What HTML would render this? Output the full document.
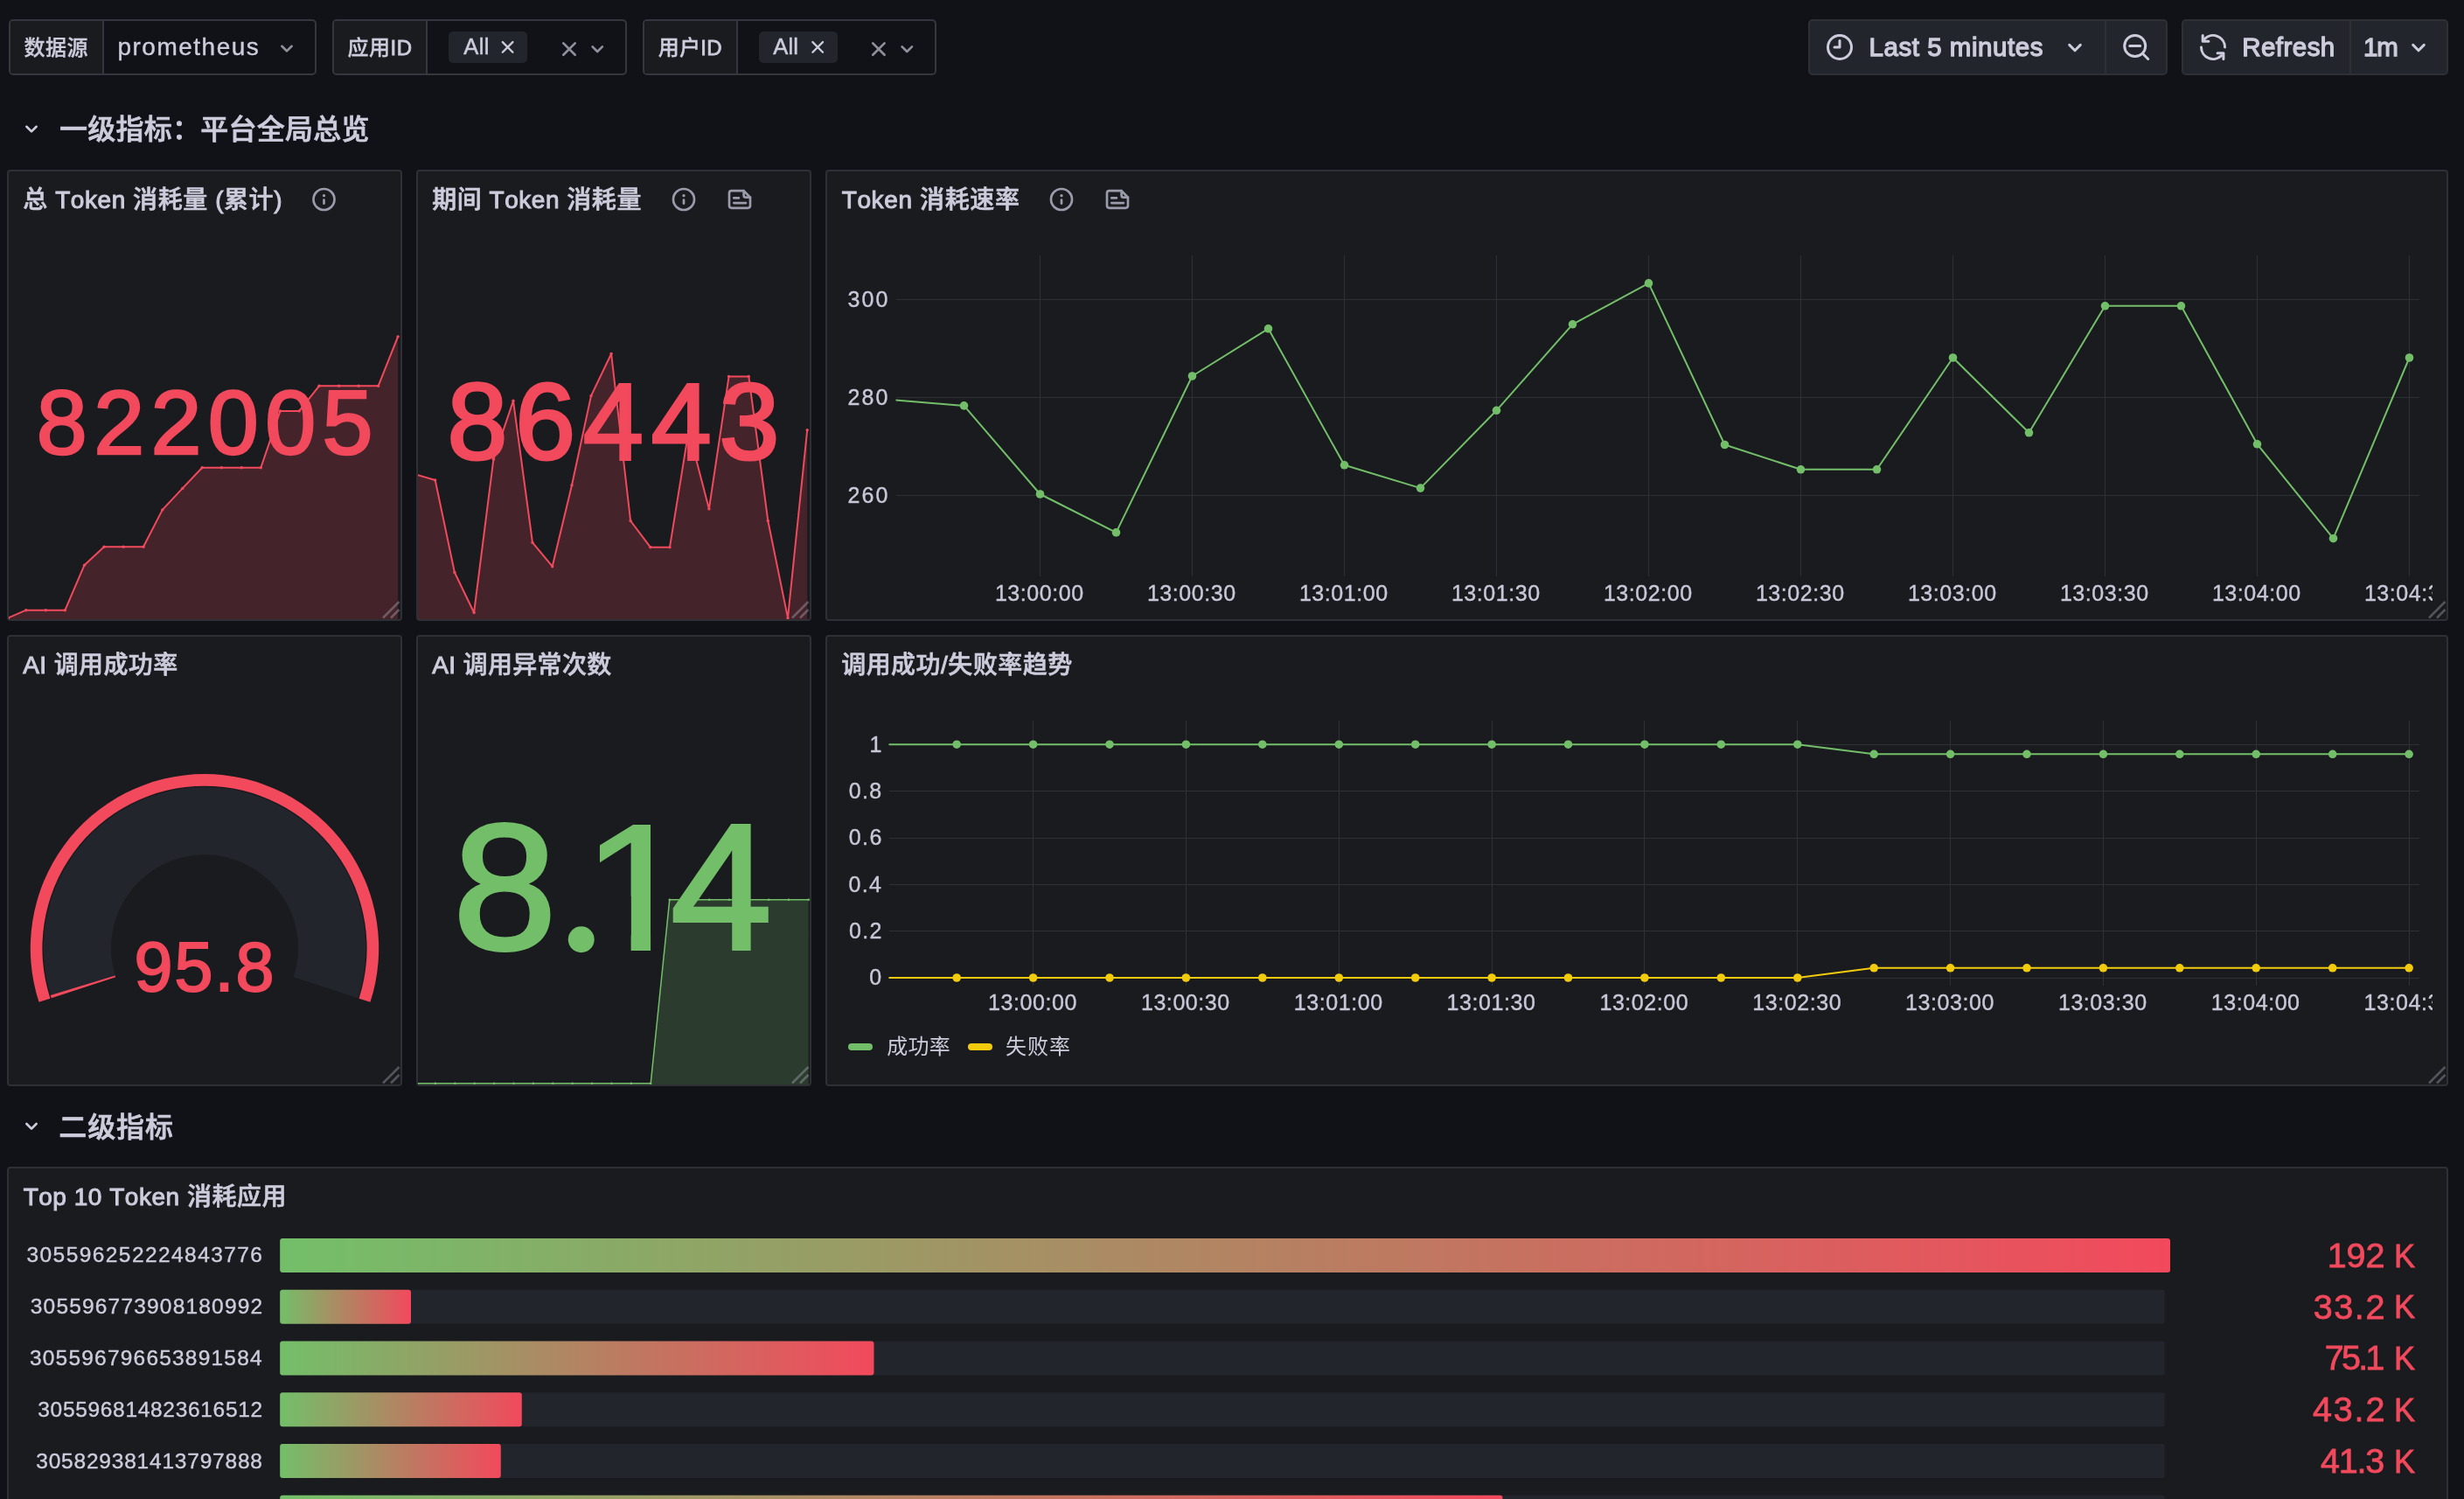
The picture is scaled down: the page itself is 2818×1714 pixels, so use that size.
<!DOCTYPE html><html lang="zh"><head><meta charset="utf-8"><title>Dashboard</title><style>
*{box-sizing:border-box;margin:0;padding:0}
html,body{background:#111217}
#root{position:relative;width:2818px;height:1714px;overflow:hidden;background:#111217}
body{font-family:"Liberation Sans","Noto Sans CJK SC",sans-serif;color:#ccccdc;-webkit-font-smoothing:antialiased;font-kerning:none;font-variant-ligatures:none}
.abs{position:absolute}
.panel{position:absolute;background:#1a1b1f;border:2px solid #2e3036;border-radius:4px;overflow:hidden}
.ptitle{position:absolute;left:17px;top:14px;height:40px;line-height:40px;font-size:28px;font-weight:500;white-space:nowrap;color:#ccccdc;-webkit-text-stroke:0.5px #ccccdc}
.t{position:absolute;white-space:nowrap;line-height:1}
.varbox{position:absolute;top:22px;height:64px;border:2px solid #36373e;border-radius:5px;background:#111217}
.varlab{position:absolute;left:0;top:0;bottom:0;background:#1a1b1f;border-right:2px solid #36373e;border-radius:3px 0 0 3px}
.chip{position:absolute;top:12px;height:36px;background:#22252b;border-radius:5px}
.tbtn{position:absolute;top:22px;height:64px;background:#22252b;border:2px solid #2e3036}
svg{position:absolute;left:0;top:0;overflow:visible}
.txt{position:absolute;left:0;top:0;width:2818px;height:1714px;will-change:transform}
.big{position:absolute;white-space:nowrap;line-height:1;font-weight:400}
</style></head><body><div id="root">
<div class="varbox" style="left:10px;width:352px"><div class="varlab" style="width:107px"></div></div>
<div class="varbox" style="left:380px;width:337px"><div class="varlab" style="width:107px"></div><div class="chip" style="left:131px;width:90px"></div></div>
<div class="varbox" style="left:735px;width:336px"><div class="varlab" style="width:107px"></div><div class="chip" style="left:131px;width:90px"></div></div>
<div class="tbtn" style="left:2068px;width:341px;border-radius:5px 0 0 5px"></div>
<div class="tbtn" style="left:2407px;width:72px;border-radius:0 5px 5px 0"></div>
<div class="tbtn" style="left:2495px;width:194px;border-radius:5px 0 0 5px"></div>
<div class="tbtn" style="left:2687px;width:113px;border-radius:0 5px 5px 0"></div>
<div class="panel" style="left:8px;top:194px;width:452px;height:516px"></div>
<div class="panel" style="left:476px;top:194px;width:452px;height:516px"></div>
<div class="panel" style="left:944px;top:194px;width:1856px;height:516px"></div>
<div class="panel" style="left:8px;top:726px;width:452px;height:516px"></div>
<div class="panel" style="left:476px;top:726px;width:452px;height:516px"></div>
<div class="panel" style="left:944px;top:726px;width:1856px;height:516px"></div>
<div class="panel" style="left:8px;top:1334px;width:2792px;height:420px"></div>
<svg width="2818" height="1714" viewBox="0 0 2818 1714"><path d="M322.4 52.8 L328.0 58.4 L333.6 52.8" fill="none" stroke="#8f909c" stroke-width="2.67" stroke-linecap="round" stroke-linejoin="round"/><path d="M574.8 48.1 L586.4 59.7 M586.4 48.1 L574.8 59.7" fill="none" stroke="#ccccdc" stroke-width="2.33" stroke-linecap="round"/><path d="M644.3 49.4 L657.7 62.8 M657.7 49.4 L644.3 62.8" fill="none" stroke="#8f909c" stroke-width="2.67" stroke-linecap="round"/><path d="M677.6 53.4 L683.2 59.0 L688.9 53.4" fill="none" stroke="#8f909c" stroke-width="2.67" stroke-linecap="round" stroke-linejoin="round"/><path d="M929.4 48.1 L941.0 59.7 M941.0 48.1 L929.4 59.7" fill="none" stroke="#ccccdc" stroke-width="2.33" stroke-linecap="round"/><path d="M998.2 49.4 L1011.6 62.8 M1011.6 49.4 L998.2 62.8" fill="none" stroke="#8f909c" stroke-width="2.67" stroke-linecap="round"/><path d="M1031.6 53.4 L1037.3 59.0 L1043.0 53.4" fill="none" stroke="#8f909c" stroke-width="2.67" stroke-linecap="round" stroke-linejoin="round"/><path d="M2366.7 51.4 L2373.0 57.8 L2379.3 51.4" fill="none" stroke="#ccccdc" stroke-width="3" stroke-linecap="round" stroke-linejoin="round"/><path d="M2759.7 51.4 L2766.0 57.8 L2772.3 51.4" fill="none" stroke="#ccccdc" stroke-width="3" stroke-linecap="round" stroke-linejoin="round"/><circle cx="2104" cy="54" r="13.5" fill="none" stroke="#ccccdc" stroke-width="3"/><path d="M2104 46.5 V54 H2098" fill="none" stroke="#ccccdc" stroke-width="3" stroke-linecap="round" stroke-linejoin="round"/><circle cx="2441.7" cy="52.5" r="12" fill="none" stroke="#ccccdc" stroke-width="3"/><path d="M2435.7 52.5 H2447.7 M2451.2 62.0 L2456.7 67.5" stroke="#ccccdc" stroke-width="3" stroke-linecap="round"/><path d="M2521.5 44.4 A13.5 13.5 0 0 1 2544.5 54.0" fill="none" stroke="#ccccdc" stroke-width="3" stroke-linecap="round"/><path d="M2517.5 54.0 A13.5 13.5 0 0 0 2540.5 63.6" fill="none" stroke="#ccccdc" stroke-width="3" stroke-linecap="round"/><path d="M2519.2 40.5 V47.25 H2525.9" fill="none" stroke="#ccccdc" stroke-width="3" stroke-linecap="round" stroke-linejoin="round"/><path d="M2536.1 60.75 H2542.9 V67.5" fill="none" stroke="#ccccdc" stroke-width="3" stroke-linecap="round" stroke-linejoin="round"/><path d="M30.4 144.8 L36.0 150.4 L41.6 144.8" fill="none" stroke="#ccccdc" stroke-width="2.67" stroke-linecap="round" stroke-linejoin="round"/><path d="M30.4 1285.0 L36.0 1290.6 L41.6 1285.0" fill="none" stroke="#ccccdc" stroke-width="2.67" stroke-linecap="round" stroke-linejoin="round"/><defs><clipPath id="c1"><rect x="10" y="196" width="448" height="512"/></clipPath><clipPath id="c2"><rect x="478" y="196" width="448" height="512"/></clipPath><clipPath id="c5"><rect x="478" y="728" width="448" height="512"/></clipPath><clipPath id="c3"><rect x="1024.5" y="280" width="1743" height="390"/></clipPath><clipPath id="c6"><rect x="1016.5" y="815" width="1751" height="320"/></clipPath></defs><g clip-path="url(#c1)"><path d="M9.5 706.5 L29.8 697.7 L52.3 697.7 L74.4 697.7 L96.5 646.2 L119.0 625.2 L141.2 625.2 L164.0 625.2 L185.8 582.9 L208.7 558.4 L231.2 534.8 L253.3 534.8 L276.2 534.8 L298.3 534.8 L320.5 469.9 L342.2 469.9 L365.0 441.3 L387.6 441.3 L410.1 441.3 L432.6 441.3 L455.1 384.9 L455.1 709 L9.5 709 Z" fill="#F2495C" fill-opacity="0.2" stroke="none"/><path d="M9.5 706.5 L29.8 697.7 L52.3 697.7 L74.4 697.7 L96.5 646.2 L119.0 625.2 L141.2 625.2 L164.0 625.2 L185.8 582.9 L208.7 558.4 L231.2 534.8 L253.3 534.8 L276.2 534.8 L298.3 534.8 L320.5 469.9 L342.2 469.9 L365.0 441.3 L387.6 441.3 L410.1 441.3 L432.6 441.3 L455.1 384.9" fill="none" stroke="#F2495C" stroke-width="2" stroke-linejoin="round"/><circle cx="9.5" cy="706.5" r="1.7" fill="#F2495C"/><circle cx="29.8" cy="697.7" r="1.7" fill="#F2495C"/><circle cx="52.3" cy="697.7" r="1.7" fill="#F2495C"/><circle cx="74.4" cy="697.7" r="1.7" fill="#F2495C"/><circle cx="96.5" cy="646.2" r="1.7" fill="#F2495C"/><circle cx="119.0" cy="625.2" r="1.7" fill="#F2495C"/><circle cx="141.2" cy="625.2" r="1.7" fill="#F2495C"/><circle cx="164.0" cy="625.2" r="1.7" fill="#F2495C"/><circle cx="185.8" cy="582.9" r="1.7" fill="#F2495C"/><circle cx="208.7" cy="558.4" r="1.7" fill="#F2495C"/><circle cx="231.2" cy="534.8" r="1.7" fill="#F2495C"/><circle cx="253.3" cy="534.8" r="1.7" fill="#F2495C"/><circle cx="276.2" cy="534.8" r="1.7" fill="#F2495C"/><circle cx="298.3" cy="534.8" r="1.7" fill="#F2495C"/><circle cx="320.5" cy="469.9" r="1.7" fill="#F2495C"/><circle cx="342.2" cy="469.9" r="1.7" fill="#F2495C"/><circle cx="365.0" cy="441.3" r="1.7" fill="#F2495C"/><circle cx="387.6" cy="441.3" r="1.7" fill="#F2495C"/><circle cx="410.1" cy="441.3" r="1.7" fill="#F2495C"/><circle cx="432.6" cy="441.3" r="1.7" fill="#F2495C"/><circle cx="455.1" cy="384.9" r="1.7" fill="#F2495C"/></g><g clip-path="url(#c2)"><path d="M475.5 542.5 L497.7 549.0 L519.9 654.5 L542.1 700.5 L564.4 525.2 L587.0 458.3 L609.0 620.4 L631.7 647.7 L654.0 554.7 L676.0 452.6 L699.1 404.5 L721.1 595.5 L743.8 625.7 L766.0 625.7 L787.6 492.3 L810.9 581.9 L833.6 430.4 L856.3 430.4 L878.3 595.5 L901.0 706.6 L923.2 491.8 L923.2 709 L475.5 709 Z" fill="#F2495C" fill-opacity="0.2" stroke="none"/><path d="M475.5 542.5 L497.7 549.0 L519.9 654.5 L542.1 700.5 L564.4 525.2 L587.0 458.3 L609.0 620.4 L631.7 647.7 L654.0 554.7 L676.0 452.6 L699.1 404.5 L721.1 595.5 L743.8 625.7 L766.0 625.7 L787.6 492.3 L810.9 581.9 L833.6 430.4 L856.3 430.4 L878.3 595.5 L901.0 706.6 L923.2 491.8" fill="none" stroke="#F2495C" stroke-width="2" stroke-linejoin="round"/><circle cx="475.5" cy="542.5" r="1.7" fill="#F2495C"/><circle cx="497.7" cy="549.0" r="1.7" fill="#F2495C"/><circle cx="519.9" cy="654.5" r="1.7" fill="#F2495C"/><circle cx="542.1" cy="700.5" r="1.7" fill="#F2495C"/><circle cx="564.4" cy="525.2" r="1.7" fill="#F2495C"/><circle cx="587.0" cy="458.3" r="1.7" fill="#F2495C"/><circle cx="609.0" cy="620.4" r="1.7" fill="#F2495C"/><circle cx="631.7" cy="647.7" r="1.7" fill="#F2495C"/><circle cx="654.0" cy="554.7" r="1.7" fill="#F2495C"/><circle cx="676.0" cy="452.6" r="1.7" fill="#F2495C"/><circle cx="699.1" cy="404.5" r="1.7" fill="#F2495C"/><circle cx="721.1" cy="595.5" r="1.7" fill="#F2495C"/><circle cx="743.8" cy="625.7" r="1.7" fill="#F2495C"/><circle cx="766.0" cy="625.7" r="1.7" fill="#F2495C"/><circle cx="787.6" cy="492.3" r="1.7" fill="#F2495C"/><circle cx="810.9" cy="581.9" r="1.7" fill="#F2495C"/><circle cx="833.6" cy="430.4" r="1.7" fill="#F2495C"/><circle cx="856.3" cy="430.4" r="1.7" fill="#F2495C"/><circle cx="878.3" cy="595.5" r="1.7" fill="#F2495C"/><circle cx="901.0" cy="706.6" r="1.7" fill="#F2495C"/><circle cx="923.2" cy="491.8" r="1.7" fill="#F2495C"/></g><g clip-path="url(#c5)"><path d="M475.5 1238.8 L497.9 1238.8 L520.3 1238.8 L542.7 1238.8 L565.1 1238.8 L587.5 1238.8 L609.9 1238.8 L632.3 1238.8 L654.7 1238.8 L677.1 1238.8 L699.5 1238.8 L721.9 1238.8 L744.2 1238.8 L765.8 1028.7 L788.5 1028.7 L811.2 1028.7 L833.9 1028.7 L856.6 1028.7 L879.3 1028.7 L902.0 1028.7 L924.7 1028.7 L924.7 1241 L475.5 1241 Z" fill="#73BF69" fill-opacity="0.2" stroke="none"/><path d="M475.5 1238.8 L497.9 1238.8 L520.3 1238.8 L542.7 1238.8 L565.1 1238.8 L587.5 1238.8 L609.9 1238.8 L632.3 1238.8 L654.7 1238.8 L677.1 1238.8 L699.5 1238.8 L721.9 1238.8 L744.2 1238.8 L765.8 1028.7 L788.5 1028.7 L811.2 1028.7 L833.9 1028.7 L856.6 1028.7 L879.3 1028.7 L902.0 1028.7 L924.7 1028.7" fill="none" stroke="#73BF69" stroke-width="1.5" stroke-linejoin="round"/><circle cx="475.5" cy="1238.8" r="1.3" fill="#73BF69"/><circle cx="497.9" cy="1238.8" r="1.3" fill="#73BF69"/><circle cx="520.3" cy="1238.8" r="1.3" fill="#73BF69"/><circle cx="542.7" cy="1238.8" r="1.3" fill="#73BF69"/><circle cx="565.1" cy="1238.8" r="1.3" fill="#73BF69"/><circle cx="587.5" cy="1238.8" r="1.3" fill="#73BF69"/><circle cx="609.9" cy="1238.8" r="1.3" fill="#73BF69"/><circle cx="632.3" cy="1238.8" r="1.3" fill="#73BF69"/><circle cx="654.7" cy="1238.8" r="1.3" fill="#73BF69"/><circle cx="677.1" cy="1238.8" r="1.3" fill="#73BF69"/><circle cx="699.5" cy="1238.8" r="1.3" fill="#73BF69"/><circle cx="721.9" cy="1238.8" r="1.3" fill="#73BF69"/><circle cx="744.2" cy="1238.8" r="1.3" fill="#73BF69"/><circle cx="765.8" cy="1028.7" r="1.3" fill="#73BF69"/><circle cx="788.5" cy="1028.7" r="1.3" fill="#73BF69"/><circle cx="811.2" cy="1028.7" r="1.3" fill="#73BF69"/><circle cx="833.9" cy="1028.7" r="1.3" fill="#73BF69"/><circle cx="856.6" cy="1028.7" r="1.3" fill="#73BF69"/><circle cx="879.3" cy="1028.7" r="1.3" fill="#73BF69"/><circle cx="902.0" cy="1028.7" r="1.3" fill="#73BF69"/><circle cx="924.7" cy="1028.7" r="1.3" fill="#73BF69"/></g><circle cx="370.5" cy="228" r="12" fill="none" stroke="#9a9bab" stroke-width="2.67"/><circle cx="370.5" cy="223.67" r="1.67" fill="#9a9bab"/><path d="M370.5 228.67 V232.67" stroke="#9a9bab" stroke-width="2.67" stroke-linecap="round"/><circle cx="782" cy="228" r="12" fill="none" stroke="#9a9bab" stroke-width="2.67"/><circle cx="782" cy="223.67" r="1.67" fill="#9a9bab"/><path d="M782 228.67 V232.67" stroke="#9a9bab" stroke-width="2.67" stroke-linecap="round"/><g transform="translate(846 228)" fill="none" stroke="#9a9bab" stroke-width="2.67" stroke-linejoin="round" stroke-linecap="round"><path d="M-9.3 -9.8 H4.6 L12 -2.4 V7.1 a2.7 2.7 0 0 1 -2.7 2.7 H-9.3 a2.7 2.7 0 0 1 -2.7 -2.7 V-7.1 a2.7 2.7 0 0 1 2.7 -2.7 Z"/><path d="M4.6 -9.8 V-4.6 a2.2 2.2 0 0 0 2.2 2.2 H12"/><path d="M-6.7 -1.6 H-1.1 M-6.7 4.1 H7"/></g><circle cx="1214" cy="228" r="12" fill="none" stroke="#9a9bab" stroke-width="2.67"/><circle cx="1214" cy="223.67" r="1.67" fill="#9a9bab"/><path d="M1214 228.67 V232.67" stroke="#9a9bab" stroke-width="2.67" stroke-linecap="round"/><g transform="translate(1278 228)" fill="none" stroke="#9a9bab" stroke-width="2.67" stroke-linejoin="round" stroke-linecap="round"><path d="M-9.3 -9.8 H4.6 L12 -2.4 V7.1 a2.7 2.7 0 0 1 -2.7 2.7 H-9.3 a2.7 2.7 0 0 1 -2.7 -2.7 V-7.1 a2.7 2.7 0 0 1 2.7 -2.7 Z"/><path d="M4.6 -9.8 V-4.6 a2.2 2.2 0 0 0 2.2 2.2 H12"/><path d="M-6.7 -1.6 H-1.1 M-6.7 4.1 H7"/></g><path d="M438 706.5 L456.5 688 M447 706.5 L456.5 697" stroke="rgba(204,204,220,0.33)" stroke-width="2.5" stroke-linecap="butt" fill="none"/><path d="M906 706.5 L924.5 688 M915 706.5 L924.5 697" stroke="rgba(204,204,220,0.33)" stroke-width="2.5" stroke-linecap="butt" fill="none"/><path d="M2778 706.5 L2796.5 688 M2787 706.5 L2796.5 697" stroke="rgba(204,204,220,0.33)" stroke-width="2.5" stroke-linecap="butt" fill="none"/><path d="M438 1238.5 L456.5 1220 M447 1238.5 L456.5 1229" stroke="rgba(204,204,220,0.33)" stroke-width="2.5" stroke-linecap="butt" fill="none"/><path d="M906 1238.5 L924.5 1220 M915 1238.5 L924.5 1229" stroke="rgba(204,204,220,0.33)" stroke-width="2.5" stroke-linecap="butt" fill="none"/><path d="M2778 1238.5 L2796.5 1220 M2787 1238.5 L2796.5 1229" stroke="rgba(204,204,220,0.33)" stroke-width="2.5" stroke-linecap="butt" fill="none"/><rect x="1189" y="292" width="1" height="367" fill="#2d3035"/><rect x="1363" y="292" width="1" height="367" fill="#2d3035"/><rect x="1537" y="292" width="1" height="367" fill="#2d3035"/><rect x="1711" y="292" width="1" height="367" fill="#2d3035"/><rect x="1885" y="292" width="1" height="367" fill="#2d3035"/><rect x="2059" y="292" width="1" height="367" fill="#2d3035"/><rect x="2233" y="292" width="1" height="367" fill="#2d3035"/><rect x="2407" y="292" width="1" height="367" fill="#2d3035"/><rect x="2581" y="292" width="1" height="367" fill="#2d3035"/><rect x="2755" y="292" width="1" height="367" fill="#2d3035"/><rect x="1025" y="342" width="1742" height="1" fill="#2d3035"/><rect x="1025" y="454" width="1742" height="1" fill="#2d3035"/><rect x="1025" y="566" width="1742" height="1" fill="#2d3035"/><g clip-path="url(#c3)"><path d="M1015.5 456.8 L1102.5 463.9 L1189.5 565.0 L1276.5 608.9 L1363.5 430.0 L1450.5 375.8 L1537.5 531.8 L1624.5 558.1 L1711.5 469.3 L1798.5 370.8 L1885.5 323.9 L1972.5 508.5 L2059.5 536.8 L2146.5 536.8 L2233.5 409.0 L2320.5 494.8 L2407.5 349.8 L2494.5 349.8 L2581.5 507.8 L2668.5 615.7 L2755.5 409.0" fill="none" stroke="#73BF69" stroke-width="2" stroke-linejoin="round"/></g><circle cx="1102.5" cy="463.9" r="4.8" fill="#73BF69"/><circle cx="1189.5" cy="565.0" r="4.8" fill="#73BF69"/><circle cx="1276.5" cy="608.9" r="4.8" fill="#73BF69"/><circle cx="1363.5" cy="430.0" r="4.8" fill="#73BF69"/><circle cx="1450.5" cy="375.8" r="4.8" fill="#73BF69"/><circle cx="1537.5" cy="531.8" r="4.8" fill="#73BF69"/><circle cx="1624.5" cy="558.1" r="4.8" fill="#73BF69"/><circle cx="1711.5" cy="469.3" r="4.8" fill="#73BF69"/><circle cx="1798.5" cy="370.8" r="4.8" fill="#73BF69"/><circle cx="1885.5" cy="323.9" r="4.8" fill="#73BF69"/><circle cx="1972.5" cy="508.5" r="4.8" fill="#73BF69"/><circle cx="2059.5" cy="536.8" r="4.8" fill="#73BF69"/><circle cx="2146.5" cy="536.8" r="4.8" fill="#73BF69"/><circle cx="2233.5" cy="409.0" r="4.8" fill="#73BF69"/><circle cx="2320.5" cy="494.8" r="4.8" fill="#73BF69"/><circle cx="2407.5" cy="349.8" r="4.8" fill="#73BF69"/><circle cx="2494.5" cy="349.8" r="4.8" fill="#73BF69"/><circle cx="2581.5" cy="507.8" r="4.8" fill="#73BF69"/><circle cx="2668.5" cy="615.7" r="4.8" fill="#73BF69"/><circle cx="2755.5" cy="409.0" r="4.8" fill="#73BF69"/><path d="M44.55 1145.86 A199.2 199.2 0 1 1 423.45 1145.86 L410.52 1141.65 A185.6 185.6 0 1 0 57.48 1141.65 Z" fill="#F2495C"/><path d="M58.82 1141.22 A184.2 184.2 0 1 1 409.18 1141.22 L335.76 1117.36 A107 107 0 1 0 132.24 1117.36 Z" fill="#22252b"/><path d="M58.82 1141.22 A184.2 184.2 0 0 1 57.77 1137.91 L131.63 1115.44 A107 107 0 0 0 132.24 1117.36 Z" fill="#F2495C"/><rect x="1181" y="824" width="1" height="303" fill="#2d3035"/><rect x="1356" y="824" width="1" height="303" fill="#2d3035"/><rect x="1531" y="824" width="1" height="303" fill="#2d3035"/><rect x="1706" y="824" width="1" height="303" fill="#2d3035"/><rect x="1880" y="824" width="1" height="303" fill="#2d3035"/><rect x="2055" y="824" width="1" height="303" fill="#2d3035"/><rect x="2230" y="824" width="1" height="303" fill="#2d3035"/><rect x="2405" y="824" width="1" height="303" fill="#2d3035"/><rect x="2580" y="824" width="1" height="303" fill="#2d3035"/><rect x="2755" y="824" width="1" height="303" fill="#2d3035"/><rect x="1017" y="851" width="1750" height="1" fill="#2d3035"/><rect x="1017" y="904" width="1750" height="1" fill="#2d3035"/><rect x="1017" y="958" width="1750" height="1" fill="#2d3035"/><rect x="1017" y="1011" width="1750" height="1" fill="#2d3035"/><rect x="1017" y="1064" width="1750" height="1" fill="#2d3035"/><rect x="1017" y="1118" width="1750" height="1" fill="#2d3035"/><g clip-path="url(#c6)"><path d="M1010.0 851.2 L1094.2 851.2 L1181.6 851.2 L1269.0 851.2 L1356.4 851.2 L1443.8 851.2 L1531.3 851.2 L1618.7 851.2 L1706.1 851.2 L1793.5 851.2 L1880.9 851.2 L1968.3 851.2 L2055.8 851.2 L2143.2 862.3 L2230.6 862.3 L2318.0 862.3 L2405.4 862.3 L2492.8 862.3 L2580.2 862.3 L2667.7 862.3 L2755.1 862.3" fill="none" stroke="#73BF69" stroke-width="2" stroke-linejoin="round"/></g><circle cx="1094.2" cy="851.2" r="4.8" fill="#73BF69"/><circle cx="1181.6" cy="851.2" r="4.8" fill="#73BF69"/><circle cx="1269.0" cy="851.2" r="4.8" fill="#73BF69"/><circle cx="1356.4" cy="851.2" r="4.8" fill="#73BF69"/><circle cx="1443.8" cy="851.2" r="4.8" fill="#73BF69"/><circle cx="1531.3" cy="851.2" r="4.8" fill="#73BF69"/><circle cx="1618.7" cy="851.2" r="4.8" fill="#73BF69"/><circle cx="1706.1" cy="851.2" r="4.8" fill="#73BF69"/><circle cx="1793.5" cy="851.2" r="4.8" fill="#73BF69"/><circle cx="1880.9" cy="851.2" r="4.8" fill="#73BF69"/><circle cx="1968.3" cy="851.2" r="4.8" fill="#73BF69"/><circle cx="2055.8" cy="851.2" r="4.8" fill="#73BF69"/><circle cx="2143.2" cy="862.3" r="4.8" fill="#73BF69"/><circle cx="2230.6" cy="862.3" r="4.8" fill="#73BF69"/><circle cx="2318.0" cy="862.3" r="4.8" fill="#73BF69"/><circle cx="2405.4" cy="862.3" r="4.8" fill="#73BF69"/><circle cx="2492.8" cy="862.3" r="4.8" fill="#73BF69"/><circle cx="2580.2" cy="862.3" r="4.8" fill="#73BF69"/><circle cx="2667.7" cy="862.3" r="4.8" fill="#73BF69"/><circle cx="2755.1" cy="862.3" r="4.8" fill="#73BF69"/><g clip-path="url(#c6)"><path d="M1010.0 1118.0 L1094.2 1118.0 L1181.6 1118.0 L1269.0 1118.0 L1356.4 1118.0 L1443.8 1118.0 L1531.3 1118.0 L1618.7 1118.0 L1706.1 1118.0 L1793.5 1118.0 L1880.9 1118.0 L1968.3 1118.0 L2055.8 1118.0 L2143.2 1106.8 L2230.6 1106.8 L2318.0 1106.8 L2405.4 1106.8 L2492.8 1106.8 L2580.2 1106.8 L2667.7 1106.8 L2755.1 1106.8" fill="none" stroke="#F2CC0C" stroke-width="2" stroke-linejoin="round"/></g><circle cx="1094.2" cy="1118.0" r="4.8" fill="#F2CC0C"/><circle cx="1181.6" cy="1118.0" r="4.8" fill="#F2CC0C"/><circle cx="1269.0" cy="1118.0" r="4.8" fill="#F2CC0C"/><circle cx="1356.4" cy="1118.0" r="4.8" fill="#F2CC0C"/><circle cx="1443.8" cy="1118.0" r="4.8" fill="#F2CC0C"/><circle cx="1531.3" cy="1118.0" r="4.8" fill="#F2CC0C"/><circle cx="1618.7" cy="1118.0" r="4.8" fill="#F2CC0C"/><circle cx="1706.1" cy="1118.0" r="4.8" fill="#F2CC0C"/><circle cx="1793.5" cy="1118.0" r="4.8" fill="#F2CC0C"/><circle cx="1880.9" cy="1118.0" r="4.8" fill="#F2CC0C"/><circle cx="1968.3" cy="1118.0" r="4.8" fill="#F2CC0C"/><circle cx="2055.8" cy="1118.0" r="4.8" fill="#F2CC0C"/><circle cx="2143.2" cy="1106.8" r="4.8" fill="#F2CC0C"/><circle cx="2230.6" cy="1106.8" r="4.8" fill="#F2CC0C"/><circle cx="2318.0" cy="1106.8" r="4.8" fill="#F2CC0C"/><circle cx="2405.4" cy="1106.8" r="4.8" fill="#F2CC0C"/><circle cx="2492.8" cy="1106.8" r="4.8" fill="#F2CC0C"/><circle cx="2580.2" cy="1106.8" r="4.8" fill="#F2CC0C"/><circle cx="2667.7" cy="1106.8" r="4.8" fill="#F2CC0C"/><circle cx="2755.1" cy="1106.8" r="4.8" fill="#F2CC0C"/><rect x="970" y="1193" width="28" height="8" rx="4" fill="#73BF69"/><rect x="1107" y="1193" width="28" height="8" rx="4" fill="#F2CC0C"/><defs><linearGradient id="gr" x1="0" x2="1" y1="0" y2="0"><stop offset="0" stop-color="#73BF69"/><stop offset="1" stop-color="#F2495C"/></linearGradient></defs><rect x="320.2" y="1416.0" width="2155.6" height="39" rx="3" fill="#22252b"/><rect x="320.2" y="1416.0" width="2161.8" height="39" rx="3" fill="url(#gr)"/><rect x="320.2" y="1474.8" width="2155.6" height="39" rx="3" fill="#22252b"/><rect x="320.2" y="1474.8" width="149.8" height="39" rx="3" fill="url(#gr)"/><rect x="320.2" y="1533.5" width="2155.6" height="39" rx="3" fill="#22252b"/><rect x="320.2" y="1533.5" width="679.3" height="39" rx="3" fill="url(#gr)"/><rect x="320.2" y="1592.3" width="2155.6" height="39" rx="3" fill="#22252b"/><rect x="320.2" y="1592.3" width="276.6" height="39" rx="3" fill="url(#gr)"/><rect x="320.2" y="1651.0" width="2155.6" height="39" rx="3" fill="#22252b"/><rect x="320.2" y="1651.0" width="252.6" height="39" rx="3" fill="url(#gr)"/><rect x="320.2" y="1709.8" width="2155.6" height="39" rx="3" fill="#22252b"/><rect x="320.2" y="1709.8" width="1398.2" height="39" rx="3" fill="url(#gr)"/></svg>
<div class="txt"><div class="t" style="left:27.38px;top:42.68px;font-size:24px;height:24px;line-height:24px;color:#ccccdc;letter-spacing:0.534px;font-weight:500;-webkit-text-stroke:0.3px #ccccdc;">数据源</div>
<div class="t" style="left:134.40px;top:40.05px;font-size:28px;height:28px;line-height:28px;color:#ccccdc;letter-spacing:1.506px;-webkit-text-stroke:0.4px #ccccdc;">prometheus</div>
<div class="t" style="left:397.38px;top:42.68px;font-size:24px;height:24px;line-height:24px;color:#ccccdc;letter-spacing:0.539px;font-weight:500;-webkit-text-stroke:0.3px #ccccdc;">应用<span style="-webkit-text-stroke:0.8px #ccccdc">ID</span></div>
<div class="t" style="left:530.20px;top:41.01px;font-size:25.5px;height:25.5px;line-height:25.5px;color:#ccccdc;letter-spacing:0.458px;-webkit-text-stroke:0.5px #ccccdc;">All</div>
<div class="t" style="left:752.68px;top:42.68px;font-size:24px;height:24px;line-height:24px;color:#ccccdc;letter-spacing:0.307px;font-weight:500;-webkit-text-stroke:0.3px #ccccdc;">用户<span style="-webkit-text-stroke:0.8px #ccccdc">ID</span></div>
<div class="t" style="left:884.20px;top:41.01px;font-size:25.5px;height:25.5px;line-height:25.5px;color:#ccccdc;letter-spacing:0.208px;-webkit-text-stroke:0.5px #ccccdc;">All</div>
<div class="t" style="left:2137.53px;top:38.93px;font-size:29.5px;height:29.5px;line-height:29.5px;color:#ccccdc;letter-spacing:0.541px;-webkit-text-stroke:1.3px #ccccdc;">Last 5 minutes</div>
<div class="t" style="left:2564.23px;top:38.93px;font-size:29.5px;height:29.5px;line-height:29.5px;color:#ccccdc;letter-spacing:0.457px;-webkit-text-stroke:1.3px #ccccdc;">Refresh</div>
<div class="t" style="left:2702.90px;top:38.93px;font-size:29.5px;height:29.5px;line-height:29.5px;color:#ccccdc;letter-spacing:-1.089px;-webkit-text-stroke:1.3px #ccccdc;">1m</div>
<div class="t" style="left:68.01px;top:132.11px;font-size:32px;height:32px;line-height:32px;color:#ccccdc;letter-spacing:0.247px;font-weight:500;-webkit-text-stroke:0.7px #ccccdc;">一级指标：平台全局总览</div>
<div class="t" style="left:67.16px;top:1272.61px;font-size:32px;height:32px;line-height:32px;color:#ccccdc;letter-spacing:0.971px;font-weight:500;-webkit-text-stroke:0.7px #ccccdc;">二级指标</div>
<div class="t" style="left:26.24px;top:214.80px;font-size:28px;height:28px;line-height:28px;color:#ccccdc;letter-spacing:0.560px;font-weight:500;-webkit-text-stroke:0.6px #ccccdc;">总 <span style="-webkit-text-stroke:1.0px #ccccdc">Token</span> 消耗量 <span style="-webkit-text-stroke:1.0px #ccccdc">(</span>累计<span style="-webkit-text-stroke:1.0px #ccccdc">)</span></div>
<div class="t" style="left:494.20px;top:214.80px;font-size:28px;height:28px;line-height:28px;color:#ccccdc;letter-spacing:0.529px;font-weight:500;-webkit-text-stroke:0.6px #ccccdc;">期间 <span style="-webkit-text-stroke:1.0px #ccccdc">Token</span> 消耗量</div>
<div class="t" style="left:962.67px;top:214.80px;font-size:28px;height:28px;line-height:28px;color:#ccccdc;letter-spacing:0.638px;font-weight:500;-webkit-text-stroke:0.6px #ccccdc;"><span style="-webkit-text-stroke:1.0px #ccccdc">Token</span> 消耗速率</div>
<div class="t" style="left:26.25px;top:746.80px;font-size:28px;height:28px;line-height:28px;color:#ccccdc;letter-spacing:0.391px;font-weight:500;-webkit-text-stroke:0.6px #ccccdc;"><span style="-webkit-text-stroke:1.0px #ccccdc">AI</span> 调用成功率</div>
<div class="t" style="left:494.25px;top:746.80px;font-size:28px;height:28px;line-height:28px;color:#ccccdc;letter-spacing:0.349px;font-weight:500;-webkit-text-stroke:0.6px #ccccdc;"><span style="-webkit-text-stroke:1.0px #ccccdc">AI</span> 调用异常次数</div>
<div class="t" style="left:962.18px;top:746.80px;font-size:28px;height:28px;line-height:28px;color:#ccccdc;letter-spacing:0.474px;font-weight:500;-webkit-text-stroke:0.6px #ccccdc;">调用成功<span style="-webkit-text-stroke:1.0px #ccccdc">/</span>失败率趋势</div>
<div class="t" style="left:26.67px;top:1354.80px;font-size:28px;height:28px;line-height:28px;color:#ccccdc;letter-spacing:0.511px;font-weight:500;-webkit-text-stroke:0.6px #ccccdc;"><span style="-webkit-text-stroke:1.0px #ccccdc">Top</span> <span style="-webkit-text-stroke:1.0px #ccccdc">10</span> <span style="-webkit-text-stroke:1.0px #ccccdc">Token</span> 消耗应用</div>
<div class="t" style="left:1137.90px;top:666.04px;font-size:25px;height:25px;line-height:25px;color:#c7c8d7;letter-spacing:0.567px;-webkit-text-stroke:0.4px #c7c8d7;">13:00:00</div>
<div class="t" style="left:1311.90px;top:666.04px;font-size:25px;height:25px;line-height:25px;color:#c7c8d7;letter-spacing:0.567px;-webkit-text-stroke:0.4px #c7c8d7;">13:00:30</div>
<div class="t" style="left:1485.90px;top:666.04px;font-size:25px;height:25px;line-height:25px;color:#c7c8d7;letter-spacing:0.567px;-webkit-text-stroke:0.4px #c7c8d7;">13:01:00</div>
<div class="t" style="left:1659.90px;top:666.04px;font-size:25px;height:25px;line-height:25px;color:#c7c8d7;letter-spacing:0.567px;-webkit-text-stroke:0.4px #c7c8d7;">13:01:30</div>
<div class="t" style="left:1833.90px;top:666.04px;font-size:25px;height:25px;line-height:25px;color:#c7c8d7;letter-spacing:0.567px;-webkit-text-stroke:0.4px #c7c8d7;">13:02:00</div>
<div class="t" style="left:2007.90px;top:666.04px;font-size:25px;height:25px;line-height:25px;color:#c7c8d7;letter-spacing:0.567px;-webkit-text-stroke:0.4px #c7c8d7;">13:02:30</div>
<div class="t" style="left:2181.90px;top:666.04px;font-size:25px;height:25px;line-height:25px;color:#c7c8d7;letter-spacing:0.567px;-webkit-text-stroke:0.4px #c7c8d7;">13:03:00</div>
<div class="t" style="left:2355.90px;top:666.04px;font-size:25px;height:25px;line-height:25px;color:#c7c8d7;letter-spacing:0.567px;-webkit-text-stroke:0.4px #c7c8d7;">13:03:30</div>
<div class="t" style="left:2529.90px;top:666.04px;font-size:25px;height:25px;line-height:25px;color:#c7c8d7;letter-spacing:0.567px;-webkit-text-stroke:0.4px #c7c8d7;">13:04:00</div>
<div class="abs" style="left:0;top:660px;width:2782px;height:40px;overflow:hidden"><div class="abs" style="left:0;top:-660px">
<div class="t" style="left:2703.90px;top:666.04px;font-size:25px;height:25px;line-height:25px;color:#c7c8d7;letter-spacing:0.567px;-webkit-text-stroke:0.4px #c7c8d7;">13:04:30</div>
</div></div>
<div class="t" style="left:969.55px;top:329.94px;font-size:25px;height:25px;line-height:25px;color:#c7c8d7;letter-spacing:2.059px;-webkit-text-stroke:0.4px #c7c8d7;">300</div>
<div class="t" style="left:969.55px;top:441.94px;font-size:25px;height:25px;line-height:25px;color:#c7c8d7;letter-spacing:2.059px;-webkit-text-stroke:0.4px #c7c8d7;">280</div>
<div class="t" style="left:969.55px;top:553.94px;font-size:25px;height:25px;line-height:25px;color:#c7c8d7;letter-spacing:2.059px;-webkit-text-stroke:0.4px #c7c8d7;">260</div>
<div class="t" style="left:153.39px;top:1065.77px;font-size:79.1px;height:79.1px;line-height:79.1px;color:#F2495C;letter-spacing:2.031px;-webkit-text-stroke:2px #F2495C;">95.8</div>
<div class="t" style="left:41.77px;top:430.84px;font-size:104.24px;height:104.24px;line-height:104.24px;color:#F2495C;letter-spacing:7.393px;-webkit-text-stroke:2.6px #F2495C;">822005</div>
<div class="t" style="left:511.62px;top:421.05px;font-size:123.73px;height:123.73px;line-height:123.73px;color:#F2495C;letter-spacing:8.888px;-webkit-text-stroke:3.2px #F2495C;">86443</div>
<div class="t" style="left:0;top:912.11px;font-size:204px;height:204px;line-height:204px"><span style="display:inline-block;width:0;height:0;line-height:0;position:relative;white-space:nowrap;transform-origin:0 0;left:518.13px;top:0.00px;font-size:204px;color:#73BF69;-webkit-text-stroke:4px #73BF69;transform:scaleX(1.0449);">8</span><span style="display:inline-block;width:0;height:0;line-height:0;position:relative;white-space:nowrap;transform-origin:0 0;left:633.46px;top:4.80px;font-size:226.06px;color:#73BF69;font-weight:700;clip-path:circle(14.95px at 31.29px 62.38px);">.</span><span style="display:inline-block;width:0;height:0;line-height:0;position:relative;white-space:nowrap;transform-origin:0 0;left:665.06px;top:1.00px;font-size:205.81px;color:#73BF69;-webkit-text-stroke:2px #73BF69;transform:scaleX(1.1165);clip-path:polygon(-10px -152.9px,71.0px -152.9px,71.0px 152.9px,50.7px 152.9px,50.7px 9.6px,-10px 9.6px);">1</span><span style="display:inline-block;width:0;height:0;line-height:0;position:relative;white-space:nowrap;transform-origin:0 0;left:766.86px;top:0.00px;font-size:204px;color:#73BF69;-webkit-text-stroke:4px #73BF69;transform:scaleX(1.0206);">4</span></div>
<div class="t" style="left:1130.10px;top:1134.24px;font-size:25px;height:25px;line-height:25px;color:#c7c8d7;letter-spacing:0.567px;-webkit-text-stroke:0.4px #c7c8d7;">13:00:00</div>
<div class="t" style="left:1304.93px;top:1134.24px;font-size:25px;height:25px;line-height:25px;color:#c7c8d7;letter-spacing:0.567px;-webkit-text-stroke:0.4px #c7c8d7;">13:00:30</div>
<div class="t" style="left:1479.76px;top:1134.24px;font-size:25px;height:25px;line-height:25px;color:#c7c8d7;letter-spacing:0.567px;-webkit-text-stroke:0.4px #c7c8d7;">13:01:00</div>
<div class="t" style="left:1654.59px;top:1134.24px;font-size:25px;height:25px;line-height:25px;color:#c7c8d7;letter-spacing:0.567px;-webkit-text-stroke:0.4px #c7c8d7;">13:01:30</div>
<div class="t" style="left:1829.42px;top:1134.24px;font-size:25px;height:25px;line-height:25px;color:#c7c8d7;letter-spacing:0.567px;-webkit-text-stroke:0.4px #c7c8d7;">13:02:00</div>
<div class="t" style="left:2004.25px;top:1134.24px;font-size:25px;height:25px;line-height:25px;color:#c7c8d7;letter-spacing:0.567px;-webkit-text-stroke:0.4px #c7c8d7;">13:02:30</div>
<div class="t" style="left:2179.08px;top:1134.24px;font-size:25px;height:25px;line-height:25px;color:#c7c8d7;letter-spacing:0.567px;-webkit-text-stroke:0.4px #c7c8d7;">13:03:00</div>
<div class="t" style="left:2353.91px;top:1134.24px;font-size:25px;height:25px;line-height:25px;color:#c7c8d7;letter-spacing:0.567px;-webkit-text-stroke:0.4px #c7c8d7;">13:03:30</div>
<div class="t" style="left:2528.74px;top:1134.24px;font-size:25px;height:25px;line-height:25px;color:#c7c8d7;letter-spacing:0.567px;-webkit-text-stroke:0.4px #c7c8d7;">13:04:00</div>
<div class="abs" style="left:0;top:1128px;width:2782px;height:40px;overflow:hidden"><div class="abs" style="left:0;top:-1128px">
<div class="t" style="left:2703.57px;top:1134.24px;font-size:25px;height:25px;line-height:25px;color:#c7c8d7;letter-spacing:0.567px;-webkit-text-stroke:0.4px #c7c8d7;">13:04:30</div>
</div></div>
<div class="t" style="left:994.52px;top:838.64px;font-size:25px;height:25px;line-height:25px;color:#c7c8d7;letter-spacing:1.355px;-webkit-text-stroke:0.4px #c7c8d7;">1</div>
<div class="t" style="left:970.82px;top:892.04px;font-size:25px;height:25px;line-height:25px;color:#c7c8d7;letter-spacing:1.355px;-webkit-text-stroke:0.4px #c7c8d7;">0.8</div>
<div class="t" style="left:970.84px;top:945.44px;font-size:25px;height:25px;line-height:25px;color:#c7c8d7;letter-spacing:1.355px;-webkit-text-stroke:0.4px #c7c8d7;">0.6</div>
<div class="t" style="left:970.47px;top:998.74px;font-size:25px;height:25px;line-height:25px;color:#c7c8d7;letter-spacing:1.355px;-webkit-text-stroke:0.4px #c7c8d7;">0.4</div>
<div class="t" style="left:970.99px;top:1052.14px;font-size:25px;height:25px;line-height:25px;color:#c7c8d7;letter-spacing:1.355px;-webkit-text-stroke:0.4px #c7c8d7;">0.2</div>
<div class="t" style="left:994.27px;top:1105.44px;font-size:25px;height:25px;line-height:25px;color:#c7c8d7;letter-spacing:1.355px;-webkit-text-stroke:0.4px #c7c8d7;">0</div>
<div class="t" style="left:1014.14px;top:1185.48px;font-size:24px;height:24px;line-height:24px;color:#ccccdc;letter-spacing:0.332px;">成功率</div>
<div class="t" style="left:1149.99px;top:1185.48px;font-size:24px;height:24px;line-height:24px;color:#ccccdc;letter-spacing:1.004px;">失败率</div>
<div class="t" style="left:30.52px;top:1423.46px;font-size:24.5px;height:24.5px;line-height:24.5px;color:#ccccdc;letter-spacing:1.423px;-webkit-text-stroke:0.4px #ccccdc;">305596252224843776</div>
<div class="t" style="left:0;top:0"><div class="t" style="left:2661.79px;top:1415.96px;font-size:39.5px;height:39.5px;line-height:39.5px;color:#F2495C;letter-spacing:-0.154px;-webkit-text-stroke:0.8px #F2495C;">192</div> <div class="t" style="left:2737.95px;top:1418.73px;font-size:36px;height:36px;line-height:36px;color:#F2495C;-webkit-text-stroke:0.8px #F2495C;">K</div></div>
<div class="t" style="left:34.77px;top:1482.22px;font-size:24.5px;height:24.5px;line-height:24.5px;color:#ccccdc;letter-spacing:1.182px;-webkit-text-stroke:0.4px #ccccdc;">305596773908180992</div>
<div class="t" style="left:0;top:0"><div class="t" style="left:2645.70px;top:1474.72px;font-size:39.5px;height:39.5px;line-height:39.5px;color:#F2495C;letter-spacing:1.604px;-webkit-text-stroke:0.8px #F2495C;">33.2</div> <div class="t" style="left:2737.95px;top:1477.49px;font-size:36px;height:36px;line-height:36px;color:#F2495C;-webkit-text-stroke:0.8px #F2495C;">K</div></div>
<div class="t" style="left:33.97px;top:1540.98px;font-size:24.5px;height:24.5px;line-height:24.5px;color:#ccccdc;letter-spacing:1.199px;-webkit-text-stroke:0.4px #ccccdc;">305596796653891584</div>
<div class="t" style="left:0;top:0"><div class="t" style="left:2658.77px;top:1533.48px;font-size:39.5px;height:39.5px;line-height:39.5px;color:#F2495C;letter-spacing:-2.775px;-webkit-text-stroke:0.8px #F2495C;">75.1</div> <div class="t" style="left:2737.95px;top:1536.25px;font-size:36px;height:36px;line-height:36px;color:#F2495C;-webkit-text-stroke:0.8px #F2495C;">K</div></div>
<div class="t" style="left:43.27px;top:1599.74px;font-size:24.5px;height:24.5px;line-height:24.5px;color:#ccccdc;letter-spacing:0.682px;-webkit-text-stroke:0.4px #ccccdc;">305596814823616512</div>
<div class="t" style="left:0;top:0"><div class="t" style="left:2645.09px;top:1592.24px;font-size:39.5px;height:39.5px;line-height:39.5px;color:#F2495C;letter-spacing:1.805px;-webkit-text-stroke:0.8px #F2495C;">43.2</div> <div class="t" style="left:2737.95px;top:1595.01px;font-size:36px;height:36px;line-height:36px;color:#F2495C;-webkit-text-stroke:0.8px #F2495C;">K</div></div>
<div class="t" style="left:41.27px;top:1658.50px;font-size:24.5px;height:24.5px;line-height:24.5px;color:#ccccdc;letter-spacing:0.790px;-webkit-text-stroke:0.4px #ccccdc;">305829381413797888</div>
<div class="t" style="left:0;top:0"><div class="t" style="left:2654.09px;top:1651.00px;font-size:39.5px;height:39.5px;line-height:39.5px;color:#F2495C;letter-spacing:-1.279px;-webkit-text-stroke:0.8px #F2495C;">41.3</div> <div class="t" style="left:2737.95px;top:1653.77px;font-size:36px;height:36px;line-height:36px;color:#F2495C;-webkit-text-stroke:0.8px #F2495C;">K</div></div></div>
</div></body></html>
